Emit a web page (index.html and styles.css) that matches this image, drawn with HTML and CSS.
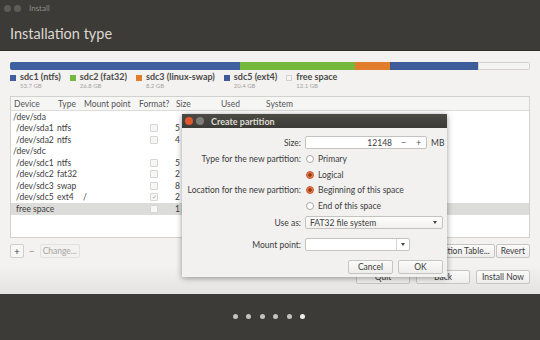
FILE: index.html
```html
<!doctype html>
<html lang="en">
<head>
    <meta charset="UTF-8">
    <title>Install</title>
    <link rel="stylesheet" href="styles.css">
</head>
<body>
    <div class="window">
        <div class="titlebar">
            <span class="wbtn"></span>
            <span class="wbtn"></span>
            <span class="wtitle">Install</span>
        </div>
        <h1 class="page-title">Installation type</h1>

        <main class="content">
            <div class="disk-bar">
                <span class="seg seg-ntfs" style="width: 230px"></span>
                <span class="seg seg-fat" style="width: 115px"></span>
                <span class="seg seg-swap" style="width: 35px"></span>
                <span class="seg seg-ext4" style="width: 88px"></span>
                <span class="seg seg-free" style="width: 52px"></span>
            </div>

            <ul class="legend">
                <li><span class="swatch seg-ntfs"></span><div><strong>sdc1 (ntfs)</strong><small>53.7 GB</small></div></li>
                <li><span class="swatch seg-fat"></span><div><strong>sdc2 (fat32)</strong><small>26.8 GB</small></div></li>
                <li><span class="swatch seg-swap"></span><div><strong>sdc3 (linux-swap)</strong><small>8.2 GB</small></div></li>
                <li><span class="swatch seg-ext4"></span><div><strong>sdc5 (ext4)</strong><small>20.4 GB</small></div></li>
                <li><span class="swatch seg-free"></span><div><strong>free space</strong><small>12.1 GB</small></div></li>
            </ul>

            <div class="table">
                <div class="row thead">
                    <span>Device</span><span>Type</span><span>Mount point</span><span>Format?</span><span>Size</span><span>Used</span><span>System</span>
                </div>
                <div class="tbody">
                    <div class="row"><span>/dev/sda</span></div>
                    <div class="row"><span class="dev">/dev/sda1</span><span>ntfs</span><span></span><span><i class="check"></i></span><span>5</span></div>
                    <div class="row"><span class="dev">/dev/sda2</span><span>ntfs</span><span></span><span><i class="check"></i></span><span>4</span></div>
                    <div class="row"><span>/dev/sdc</span></div>
                    <div class="row"><span class="dev">/dev/sdc1</span><span>ntfs</span><span></span><span><i class="check"></i></span><span>5</span></div>
                    <div class="row"><span class="dev">/dev/sdc2</span><span>fat32</span><span></span><span><i class="check"></i></span><span>2</span></div>
                    <div class="row"><span class="dev">/dev/sdc3</span><span>swap</span><span></span><span><i class="check"></i></span><span>8</span></div>
                    <div class="row"><span class="dev">/dev/sdc5</span><span>ext4</span><span>/</span><span><i class="check checked">&#10003;</i></span><span>2</span></div>
                    <div class="row selected"><span class="dev">free space</span><span></span><span></span><span><i class="check"></i></span><span>1</span></div>
                </div>
            </div>

            <div class="tools">
                <button class="tool">+</button>
                <button class="tool flat">&minus;</button>
                <button class="tool flat muted">Change...</button>
                <span class="spacer"></span>
                <button class="btn">New Partition Table...</button>
                <button class="btn">Revert</button>
            </div>

            <div class="nav">
                <button class="btn nav-btn">Quit</button>
                <button class="btn nav-btn">Back</button>
                <button class="btn nav-btn">Install Now</button>
            </div>
        </main>

        <footer class="steps">
            <span></span><span></span><span></span><span></span><span></span><span class="current"></span>
        </footer>
    </div>

    <div class="dialog">
        <div class="dialog-title">
            <span class="wbtn close"></span>
            <span class="wbtn"></span>
            <span class="dtitle">Create partition</span>
        </div>
        <div class="dialog-body">
            <div class="field f-size">
                <label>Size:</label>
                <div class="spin">
                    <span class="spin-value">12148</span>
                    <span class="spin-btn">&minus;</span>
                    <span class="spin-btn">+</span>
                </div>
                <span class="unit">MB</span>
            </div>
            <div class="field f-radio">
                <label>Type for the new partition:</label>
                <span class="radio"></span><span>Primary</span>
            </div>
            <div class="field f-radio">
                <label></label>
                <span class="radio on"></span><span>Logical</span>
            </div>
            <div class="field f-radio">
                <label>Location for the new partition:</label>
                <span class="radio on"></span><span>Beginning of this space</span>
            </div>
            <div class="field f-radio">
                <label></label>
                <span class="radio"></span><span>End of this space</span>
            </div>
            <div class="field f-combo">
                <label>Use as:</label>
                <div class="combo wide"><span>FAT32 file system</span><span class="arrow"></span></div>
            </div>
            <div class="field f-combo f-mount">
                <label>Mount point:</label>
                <div class="combo entry"><span></span><span class="arrow"></span></div>
            </div>
            <div class="dialog-buttons">
                <button class="btn">Cancel</button>
                <button class="btn">OK</button>
            </div>
        </div>
    </div>
</body>
</html>
```

FILE: styles.css
```css
body {
    margin: 0;
    width: 540px;
    height: 340px;
    overflow: hidden;
    background-color: #3c3b37;
    font-family: 'Lato', 'Liberation Sans', sans-serif;
    color: #3c3c3c;
}

.window {
    display: flex;
    flex-direction: column;
    height: 340px;
}

.titlebar {
    display: flex;
    align-items: center;
    height: 16px;
    padding-left: 4px;
}

.wbtn {
    width: 7px;
    height: 7px;
    border-radius: 50%;
    background-color: #5d5c58;
    margin-right: 3px;
}

.wtitle {
    margin-left: 5px;
    font-size: 8px;
    color: #8f8d87;
}

.page-title {
    margin: 0;
    height: 35px;
    padding: 9px 0 0 10px;
    box-sizing: border-box;
    font-size: 14.5px;
    font-weight: normal;
    color: #dcd8d0;
    border-bottom: 1px solid #2f2e2b;
}

.content {
    height: 243px;
    box-sizing: border-box;
    padding: 11px 10px 0;
    background: linear-gradient(#f3f2f0 88%, #e4e3e1);
    display: flex;
    flex-direction: column;
}

.disk-bar {
    display: flex;
    height: 8px;
    border-radius: 2px;
    overflow: hidden;
    flex-shrink: 0;
}

.seg-ntfs {
    background-color: #3f5f9f;
}

.seg-fat {
    background-color: #74b83c;
}

.seg-swap {
    background-color: #e27d2b;
}

.seg-ext4 {
    background-color: #3e5b9a;
}

.seg-free {
    background-color: #f4f4f3;
    box-shadow: inset 0 0 0 1px #d3d2cf;
}

.legend {
    list-style: none;
    margin: 2px 0 0;
    padding: 0;
    display: flex;
    height: 22px;
}

.legend li {
    display: flex;
    align-items: flex-start;
    margin-right: 9px;
}

.swatch {
    width: 6px;
    height: 6px;
    margin: 3px 4px 0 0;
}

.legend strong {
    display: block;
    font-size: 9px;
    line-height: 10px;
    font-weight: bold;
    color: #4a4a48;
}

.legend small {
    display: block;
    font-size: 6px;
    line-height: 7px;
    color: #a3a29f;
}

.table {
    margin-top: 2px;
    border: 1px solid #d2d1ce;
    display: flex;
    flex-direction: column;
    height: 142px;
    box-sizing: border-box;
}

.row {
    display: grid;
    grid-template-columns: 44px 26px 55px 37px 45px 45px 1fr;
    align-items: center;
    height: 11.5px;
    padding-left: 2px;
    font-size: 8.5px;
    white-space: nowrap;
}

.thead {
    height: 13px;
    padding-left: 3px;
    background-color: #f6f6f5;
    border-bottom: 1px solid #dddcda;
    color: #555;
}

.tbody {
    flex: 1;
    background-color: #fff;
}

.dev {
    padding-left: 3px;
}

.selected {
    background-color: #dcdcda;
}

.check {
    display: block;
    width: 6px;
    height: 6px;
    margin-left: 12px;
    border: 1px solid #d6d6d4;
    border-radius: 1px;
    background-color: #f6f6f5;
    font-style: normal;
    font-size: 6px;
    line-height: 6px;
    color: #a9a9a7;
    text-align: center;
}

.tools {
    display: flex;
    align-items: center;
    margin-top: 6px;
    height: 14px;
}

.tool {
    height: 14px;
    padding: 0 3px;
    margin-right: 1px;
    border: 1px solid #cfcecb;
    border-radius: 2px;
    background-color: #f7f7f6;
    font-family: inherit;
    font-size: 10px;
    line-height: 10px;
    color: #444;
}

.tool.flat {
    border-color: transparent;
    background: none;
    color: #888;
}

.tool.muted {
    font-size: 8.5px;
    border-color: #e3e2df;
    color: #a6a5a2;
    padding: 0 2px;
}

.spacer {
    flex: 1;
}

.btn {
    height: 14px;
    padding: 0 4px;
    margin-left: 1px;
    border: 1px solid #c6c5c1;
    border-radius: 2px;
    background: linear-gradient(#fbfbfa, #eeedeb);
    font-family: inherit;
    font-size: 8.5px;
    color: #3c3c3c;
}

.nav {
    display: flex;
    justify-content: flex-end;
    gap: 5px;
    margin-top: 12px;
}

.nav-btn {
    min-width: 54px;
    padding: 0 5px;
}

.steps {
    flex: 1;
    display: flex;
    justify-content: center;
    gap: 8.5px;
    padding: 20px 2px 0 0;
}

.steps span {
    width: 5px;
    height: 5px;
    border-radius: 50%;
    background-color: #c4c3bf;
}

.steps span.current {
    background-color: #efefec;
}

/* dialog */

.dialog {
    position: absolute;
    left: 182px;
    top: 114px;
    width: 265px;
    height: 163px;
    background-color: #f2f1f0;
    box-shadow: 0 1px 6px rgba(0, 0, 0, 0.4);
    display: flex;
    flex-direction: column;
}

.dialog-title {
    display: flex;
    align-items: center;
    height: 14px;
    padding-left: 3px;
    background: linear-gradient(#4b4a45, #3c3b37);
}

.dialog-title .wbtn {
    width: 8px;
    height: 8px;
    margin-right: 3px;
    background-color: #7d7c77;
}

.dialog-title .wbtn.close {
    background-color: #e0572c;
}

.dtitle {
    margin-left: 4px;
    font-size: 9px;
    font-weight: bold;
    color: #dfdbd2;
}

.dialog-body {
    display: flex;
    flex-direction: column;
    padding-top: 8px;
    font-size: 8.5px;
}

.field {
    display: flex;
    align-items: center;
}

.field label {
    width: 119px;
    margin-right: 4px;
    text-align: right;
    color: #3c3c3c;
    white-space: nowrap;
}

.f-size {
    height: 13px;
}

.f-radio {
    height: 15.5px;
}

.f-size + .f-radio {
    margin-top: 2.5px;
}

.f-combo {
    height: 13px;
    margin-top: 2.5px;
}

.f-mount {
    margin-top: 9px;
}

.spin {
    display: flex;
    align-items: center;
    width: 122px;
    height: 13px;
    box-sizing: border-box;
    border: 1px solid #c4c3bf;
    border-radius: 2px;
    background-color: #fff;
}

.spin-value {
    flex: 1;
    text-align: right;
    padding-right: 4px;
}

.spin-btn {
    width: 15px;
    text-align: center;
    font-size: 9px;
    color: #555;
}

.unit {
    margin-left: 4px;
}

.radio {
    width: 8px;
    height: 8px;
    box-sizing: border-box;
    margin: 0 4px 0 1px;
    border: 1px solid #a8a7a3;
    border-radius: 50%;
    background-color: #fff;
}

.radio.on {
    border-color: #c65a2c;
    background: radial-gradient(circle, #9a3d1a 0 1.5px, #e77a45 2px);
}

.combo {
    display: flex;
    align-items: center;
    height: 13px;
    box-sizing: border-box;
    border: 1px solid #c4c3bf;
    border-radius: 2px;
    background: linear-gradient(#fdfdfc, #f1f0ee);
}

.combo span:first-child {
    flex: 1;
    padding-left: 4px;
}

.combo.wide {
    width: 138px;
}

.combo.entry {
    width: 105px;
    background: #fff;
}

.arrow {
    width: 0;
    height: 0;
    margin: 0 5px;
    border-left: 2.5px solid transparent;
    border-right: 2.5px solid transparent;
    border-top: 3px solid #444;
}

.combo.entry .arrow {
    margin: 0 4px 0 0;
}

.combo.entry span:first-child {
    align-self: stretch;
    border-right: 1px solid #d6d5d2;
    margin-right: 4px;
}

.dialog-buttons {
    display: flex;
    justify-content: flex-end;
    gap: 5px;
    margin-top: 9px;
    padding-right: 4px;
}

.dialog-buttons .btn {
    width: 45px;
    margin: 0;
}
```
